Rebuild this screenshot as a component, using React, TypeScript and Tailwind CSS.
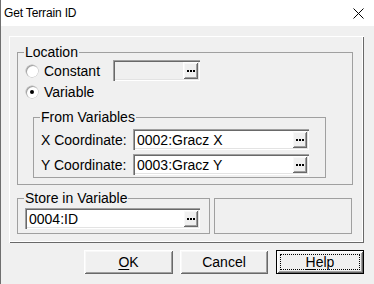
import type { ReactNode } from "react";

const SUNKEN =
  "shadow-[inset_1px_1px_0_#a0a0a0,inset_2px_2px_0_#696969,inset_-1px_-1px_0_#ffffff,inset_-2px_-2px_0_#e3e3e3]";
const RAISED =
  "shadow-[inset_1px_1px_0_#ffffff,inset_-1px_-1px_0_#696969,inset_2px_2px_0_#f8f8f8,inset_-2px_-2px_0_#a0a0a0]";

function Dots() {
  return (
    <span className={`flex h-[17px] w-[15px] shrink-0 items-center justify-center self-center mr-[2px] bg-[#f0f0f0] ${RAISED}`}>
      <svg width="8" height="2" viewBox="0 0 8 2" className="mt-[1px]">
        <rect x="0" y="0" width="2" height="2" fill="#000" />
        <rect x="3" y="0" width="2" height="2" fill="#000" />
        <rect x="6" y="0" width="2" height="2" fill="#000" />
      </svg>
    </span>
  );
}

function Field({ value, width, disabled }: { value?: string; width: string; disabled?: boolean }) {
  return (
    <div className={`flex h-[21px] ${width} ${disabled ? "bg-[#f0f0f0]" : "bg-white"} ${SUNKEN}`}>
      <span className="flex-1 self-center truncate pl-[4px] leading-[16px]">{value}</span>
      <Dots />
    </div>
  );
}

function Radio({ checked }: { checked?: boolean }) {
  return (
    <span
      className={`flex h-[12px] w-[12px] shrink-0 items-center justify-center rounded-full bg-white shadow-[inset_1px_1px_0_#a0a0a0,inset_-1px_-1px_0_#ffffff,0_0_0_0.5px_#b5b5b5]`}
    >
      {checked ? <span className="h-[4px] w-[4px] rounded-full bg-black" /> : null}
    </span>
  );
}

function Group({ label, className, children }: { label: string; className: string; children: ReactNode }) {
  return (
    <fieldset className={`border border-[#a0a0a0] ${className}`}>
      <legend className="ml-[6px] px-[1px] leading-[16px]">{label}</legend>
      {children}
    </fieldset>
  );
}

function Button({ children, isDefault }: { children: ReactNode; isDefault?: boolean }) {
  if (isDefault) {
    return (
      <button className="h-[24px] w-[88px] border border-black bg-[#f0f0f0] p-0">
        <span className={`flex h-full w-full items-center justify-center p-[3px] ${RAISED}`}>
          <span className="flex h-full w-full items-center justify-center border border-dotted border-black">
            {children}
          </span>
        </span>
      </button>
    );
  }
  return (
    <button className={`flex h-[24px] items-center justify-center bg-[#f0f0f0] ${RAISED}`}>{children}</button>
  );
}

export default function App() {
  return (
    <div className="h-[284px] w-[374px] overflow-hidden border-l border-[#6f6f6f] bg-[#f0f0f0] font-['Liberation_Sans',Arial,sans-serif] text-[14px] leading-[16px] text-black">
      <div className="flex h-[26px] items-center bg-white pl-[3px] pr-[10px]">
        <span className="text-[12px] tracking-[-0.15px]">Get Terrain ID</span>
        <svg width="11" height="11" viewBox="0 0 11 11" className="ml-auto">
          <path d="M0.5 0.5 L10.5 10.5 M10.5 0.5 L0.5 10.5" stroke="#000" strokeWidth="1" fill="none" />
        </svg>
      </div>

      <div className="pl-[8px] pt-[10px]">
        <div className="h-[207px] w-[355px] pl-[8px] pt-[8px] shadow-[inset_1px_1px_0_#ffffff,inset_-1px_-1px_0_#696969,inset_-2px_-2px_0_#ffffff]">
          <Group label="Location" className="h-[141px] w-[336px]">
            <div className="flex h-[21px] items-center pl-[8px]">
              <Radio />
              <span className="ml-[6px] w-[69px]">Constant</span>
              <Field width="w-[87px]" disabled />
            </div>
            <div className="mt-[1px] flex h-[20px] items-center pl-[8px]">
              <Radio checked />
              <span className="ml-[6px]">Variable</span>
            </div>
            <Group label="From Variables" className="ml-[15px] mt-[7px] w-[293px] pb-[2px]">
              <div className="mt-[4px] flex items-center pl-[7px]">
                <span className="w-[92px]">X Coordinate:</span>
                <Field width="w-[176px]" value="0002:Gracz X" />
              </div>
              <div className="mt-[4px] flex items-center pl-[7px]">
                <span className="w-[92px]">Y Coordinate:</span>
                <Field width="w-[176px]" value="0003:Gracz Y" />
              </div>
            </Group>
          </Group>

          <div className="mt-[5px] flex">
            <Group label="Store in Variable" className="h-[44px] w-[193px]">
              <div className="ml-[7px] mt-[2px]">
                <Field width="w-[175px]" value="0004:ID" />
              </div>
            </Group>
            <div className="ml-[4px] mt-[8px] h-[36px] w-[138px] border border-[#a0a0a0]" />
          </div>
        </div>

        <div className="mt-[7px] flex pl-[75px]">
          <div className="w-[89px]">
            <Button>
              <span className="flex h-[24px] w-[89px] items-center justify-center">
                <span className="underline underline-offset-[2px]">O</span>K
              </span>
            </Button>
          </div>
          <div className="ml-[7px] w-[88px]">
            <Button>
              <span className="flex h-[24px] w-[88px] items-center justify-center">Cancel</span>
            </Button>
          </div>
          <div className="ml-[8px]">
            <Button isDefault>
              <span className="underline underline-offset-[2px]">H</span>elp
            </Button>
          </div>
        </div>
      </div>
    </div>
  );
}
